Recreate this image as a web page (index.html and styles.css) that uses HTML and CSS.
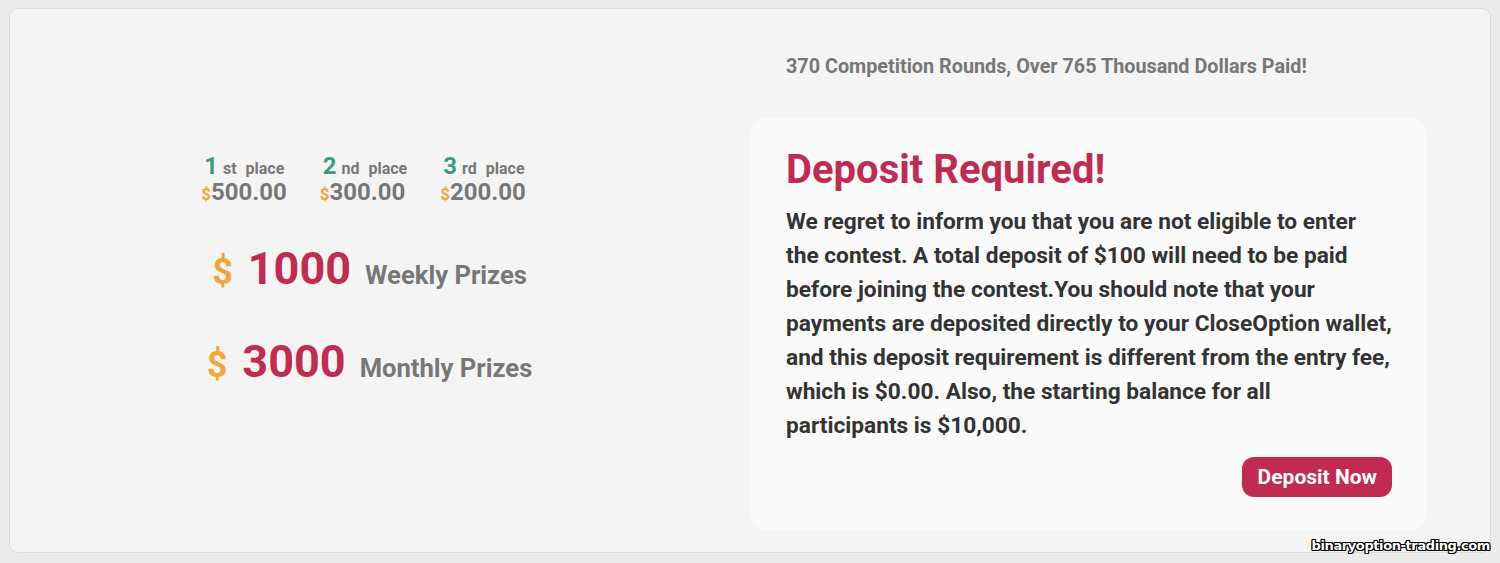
FILE: index.html
```html
<!DOCTYPE html>
<html>
<head>
<meta charset="utf-8">
<link rel="stylesheet" href="styles.css">
</head>
<body>
<div class="card">
  <div class="left">
    <div class="places">
      <div class="place">
        <div class="place-title"><span class="rank">1</span><span class="suffix">st</span><span class="word">place</span></div>
        <div class="place-amount"><span class="cur">$</span>500.00</div>
      </div>
      <div class="place">
        <div class="place-title"><span class="rank">2</span><span class="suffix">nd</span><span class="word">place</span></div>
        <div class="place-amount"><span class="cur">$</span>300.00</div>
      </div>
      <div class="place">
        <div class="place-title"><span class="rank">3</span><span class="suffix">rd</span><span class="word">place</span></div>
        <div class="place-amount"><span class="cur">$</span>200.00</div>
      </div>
    </div>
    <div class="prize weekly"><span class="big-cur">$</span><span class="big-num">1000</span><span class="prize-label">Weekly Prizes</span></div>
    <div class="prize monthly"><span class="big-cur">$</span><span class="big-num">3000</span><span class="prize-label">Monthly Prizes</span></div>
  </div>
  <div class="right">
    <div class="stats">370 Competition Rounds, Over 765 Thousand Dollars Paid!</div>
    <div class="notice">
      <h1 class="notice-title">Deposit Required!</h1>
      <p class="notice-text">We regret to inform you that you are not eligible to enter<br>the contest. A total deposit of $100 will need to be paid<br>before joining the contest.You should note that your<br>payments are deposited directly to your CloseOption wallet,<br>and this deposit requirement is different from the entry fee,<br>which is $0.00. Also, the starting balance for all<br>participants is $10,000.</p>
      <div class="actions"><button class="btn">Deposit Now</button></div>
    </div>
  </div>
  <div class="watermark">binaryoption-trading.com</div>
</div>
</body>
</html>
```

FILE: styles.css
```css
html, body {
  margin: 0;
  padding: 0;
}
body {
  background: #ebebeb;
  font-family: Roboto, "Liberation Sans", Arial, sans-serif;
  padding: 8px 9px 10px 9px;
  height: 563px;
  box-sizing: border-box;
}
.card {
  position: relative;
  display: grid;
  grid-template-columns: 715px 677px;
  column-gap: 25px;
  background: #f4f4f4;
  border: 1px solid #dcdcdc;
  border-radius: 9px;
  height: 545px;
  box-sizing: border-box;
}
.left {
  display: flex;
  flex-direction: column;
  align-items: center;
  padding-top: 146px;
}
.places {
  display: flex;
  gap: 33px;
  margin-right: 8px;
}
.place {
  display: flex;
  flex-direction: column;
}
.place-title {
  display: flex;
  align-items: baseline;
  color: #777;
  font-weight: 700;
  line-height: 22px;
  padding-left: 3px;
}
.rank {
  color: #3e9a7c;
  font-size: 24px;
  margin-right: 5px;
}
.suffix {
  font-size: 16px;
  margin-right: 9px;
}
.word {
  font-size: 16px;
}
.place-amount {
  color: #777;
  font-size: 24px;
  font-weight: 700;
  line-height: 24px;
}
.cur {
  color: #f0a733;
  font-size: 17px;
}
.prize {
  display: flex;
  align-items: baseline;
  margin-left: 4px;
}
.weekly {
  margin-top: 28px;
}
.monthly {
  margin-top: 23px;
}
.big-cur {
  color: #f0a733;
  font-size: 36px;
  font-weight: 700;
  margin-right: 15px;
}
.big-num {
  color: #c22b51;
  font-size: 45px;
  font-weight: 700;
  line-height: 70px;
  margin-right: 14px;
}
.prize-label {
  color: #777;
  font-size: 25.6px;
  font-weight: 700;
}
.right {
  display: flex;
  flex-direction: column;
  padding-top: 46px;
}
.stats {
  color: #777;
  font-size: 19.8px;
  font-weight: 700;
  line-height: 24px;
  padding-left: 36px;
}
.notice {
  margin-top: 38px;
  background: #fafafa;
  border-radius: 20px;
  padding: 28px 30px 34px 36px;
  height: 414px;
  box-sizing: border-box;
}
.notice-title {
  margin: 0;
  color: #c22b51;
  font-size: 40px;
  font-weight: 700;
  line-height: 50px;
}
.notice-text {
  margin: 10px 0 0 0;
  color: #333;
  font-size: 22.7px;
  font-weight: 700;
  line-height: 34px;
  white-space: nowrap;
}
.actions {
  display: flex;
  justify-content: flex-end;
  margin-top: 14px;
  margin-right: 5px;
}
.btn {
  background: #c22b51;
  color: #fff;
  border: none;
  border-radius: 12px;
  font-family: Roboto, "Liberation Sans", Arial, sans-serif;
  font-size: 21px;
  font-weight: 700;
  padding: 0 15px 0 16px;
  height: 40px;
}
.watermark {
  position: absolute;
  right: 0;
  bottom: -1px;
  font-family: "DejaVu Sans", Verdana, sans-serif;
  font-weight: 700;
  font-size: 13px;
  letter-spacing: -0.4px;
  color: #fff;
  text-shadow: -1px -1px 0 #000, 1px -1px 0 #000, -1px 1px 0 #000, 1px 1px 0 #000, 0 1px 0 #000, 0 -1px 0 #000, 1px 0 0 #000, -1px 0 0 #000;
}
```
